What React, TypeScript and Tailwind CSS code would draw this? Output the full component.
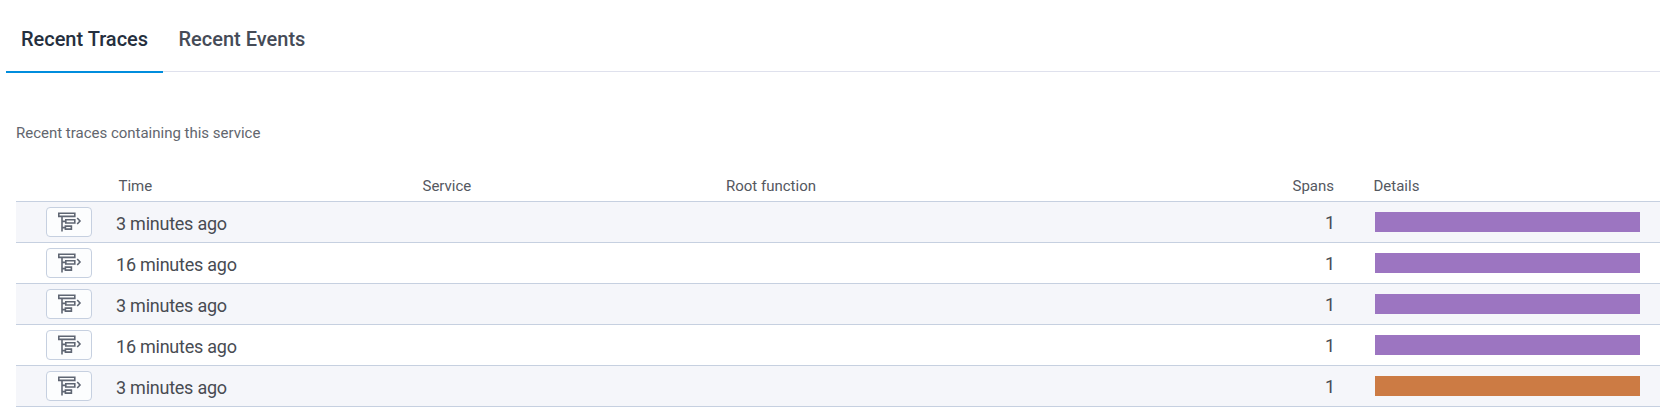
const rows = [
  { time: '3 minutes ago', spans: 1, error: false },
  { time: '16 minutes ago', spans: 1, error: false },
  { time: '3 minutes ago', spans: 1, error: false },
  { time: '16 minutes ago', spans: 1, error: false },
  { time: '3 minutes ago', spans: 1, error: true },
];

const columns = 'grid grid-cols-[100px_304px_304px_1fr_41px_285px]';

function TraceIcon() {
  return (
    <svg className="ml-px" width="24" height="20" viewBox="0 0 24 20" fill="none" stroke="#5f6673" strokeWidth="1.6">
      <path d="M0.8 1.2H16.8V4.4H0.8Z" />
      <path d="M4 4.5V19.6" />
      <path d="M4 9.4H8M4 15.6H7" />
      <path d="M7.8 7.8H16.8V11H7.8Z" />
      <path d="M7.4 14.1H13.4V17.1H7.4Z" />
      <path d="M19.2 6L22 9L19.2 12" />
    </svg>
  );
}

export default function App() {
  return (
    <main className="h-[418px] w-full overflow-hidden bg-white font-['Roboto',sans-serif] text-[#484b52]">
      <nav className="mr-[17px] ml-1.5 flex h-[73px] text-[20px] leading-[24px] font-medium">
        <button className="h-[73px] w-[157px] border-b-2 border-[#008ddd] pt-[27px] pb-[20px] text-center text-[#252f3e]">
          Recent Traces
        </button>
        <div className="mb-px h-[72px] flex-1 border-b border-[#dfe1ed]">
          <button className="pt-[27px] pl-[15.5px] text-[#454b57]">Recent Events</button>
        </div>
      </nav>
      <section className="mr-[17px] ml-4">
        <p className="pt-[50px] text-[15px] leading-[20px] tracking-[-0.01px] text-[#62666e]">
          Recent traces containing this service
        </p>
        <div className={`${columns} mt-[33px] h-[26px] border-b border-[#c6d0e0] text-[15px] leading-[20px] text-[#54585f]`}>
          <span />
          <span className="pl-[2.5px]">Time</span>
          <span className="pl-[2.5px]">Service</span>
          <span className="pl-[2px]">Root function</span>
          <span />
          <span className="-ml-[83px] flex">
            <span className="w-[42px] text-right">Spans</span>
            <span className="pl-[39.5px]">Details</span>
          </span>
        </div>
        {rows.map((row, i) => (
          <div
            key={i}
            className={`${columns} h-[41px] items-center border-b border-[#c6d0e0] text-[18px] leading-[20px] odd:bg-[#f5f6fa] even:bg-white`}
          >
            <button className="ml-[30px] flex h-[30px] w-[46px] items-center justify-center rounded-[4px] border border-[#c6d0e0] bg-[#fcfdfe]">
              <TraceIcon />
            </button>
            <span className="pt-[3px] tracking-[-0.24px]">{row.time}</span>
            <span />
            <span className="-mr-px pt-[2px] text-right">{row.spans}</span>
            <span />
            <span className={`h-5 w-[265px] ${row.error ? 'bg-[#cc7b44]' : 'bg-[#9c75c1]'}`} />
          </div>
        ))}
      </section>
    </main>
  );
}
